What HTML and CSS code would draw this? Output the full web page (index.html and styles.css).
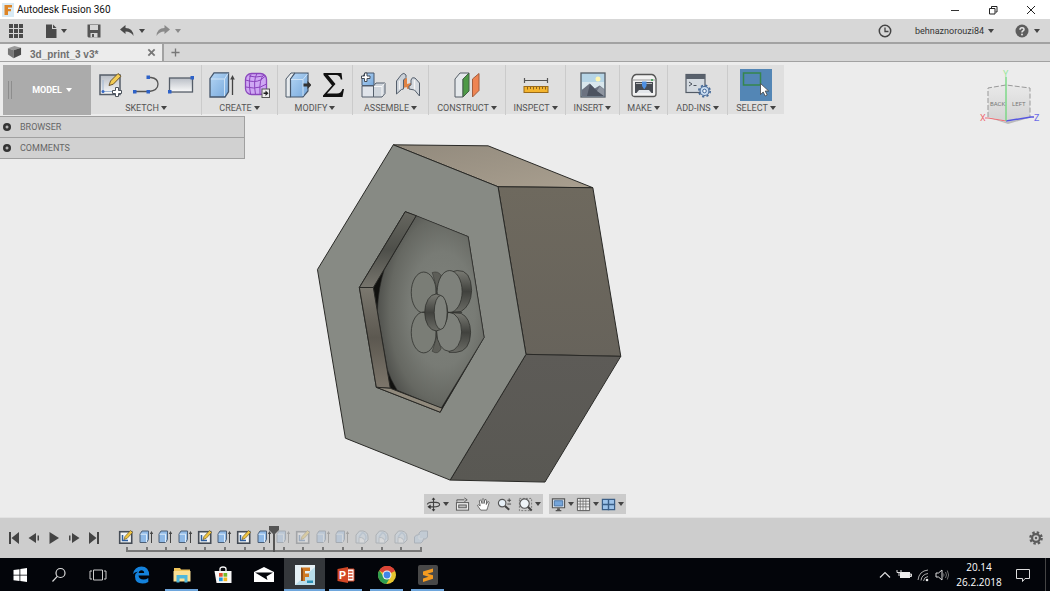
FILE: index.html
```html
<!DOCTYPE html>
<html lang="en">
<head>
  <meta charset="utf-8">
  <title>Autodesk Fusion 360</title>
  <link rel="stylesheet" href="styles.css">
</head>
<body>
  <!-- icons used more than once -->
  <svg class="sprite" aria-hidden="true">
    <defs>
      <linearGradient id="blue" x1="0" y1="0" x2="1" y2="1">
        <stop offset="0" stop-color="#b5d6f5"/>
        <stop offset="1" stop-color="#76a8dc"/>
      </linearGradient>
      <linearGradient id="metal" x1="0" y1="0" x2="0" y2="1">
        <stop offset="0" stop-color="#b9bec6"/>
        <stop offset="1" stop-color="#fafafa"/>
      </linearGradient>
    </defs>
    <symbol id="step-sketch" viewBox="0 0 16 16">
      <rect x="1.7" y="2.7" width="12" height="11.5" fill="#f2f4f6" stroke="#444b55" stroke-width="1.6"/>
      <path d="M4.5 6v5.5H10" fill="none" stroke="#2f5f9e" stroke-width="1.5"/>
      <path d="M6 10.5l1-3 5.500-6 2 2-5.500 6z" fill="#f0c440" stroke="#6d5a2a" stroke-width=".7"/>
    </symbol>
    <symbol id="step-extrude" viewBox="0 0 16 16">
      <path d="M2 5l2-3h6.500v8.500l-2 3H2z" fill="#8fb9e6" stroke="#4c5e75"/>
      <path d="M2.500 5.200H8.500v8" fill="none" stroke="#dcecfa"/>
      <path d="M13.500 14V4" stroke="#444" fill="none"/>
      <path d="M11.800 5l1.700-3 1.700 3z" fill="#444"/>
    </symbol>
    <symbol id="step-fillet" viewBox="0 0 16 16">
      <path d="M2 14V6l3.500-4H9q5 1 5 6v3l-3 3z" fill="#c9dcee" stroke="#667482"/>
      <path d="M5 14V8.500Q11 8 11 14z" fill="#f4f6f8" stroke="#8493a3"/>
      <path d="M5 8l3.500-4.500Q12 5 12 9l-1 2" fill="none" stroke="#8fb1d4" stroke-width="1.500"/>
    </symbol>
    <symbol id="step-combine" viewBox="0 0 16 16">
      <path d="M1.500 8l2-2H6V4l2-2h6.500v6l-2 2H10v2l-2 2H1.500z" fill="#a9c8e6" stroke="#5c738c"/>
      <path d="M6 6v4h4" fill="none" stroke="#e4eff8"/>
    </symbol>
  </svg>

  <header class="titlebar">
    <svg class="app-logo" viewBox="0 0 12 14"><rect width="12" height="14" fill="#d9eaf4"/><path d="M2.500 2h7.500v2.500H6V6h3v2.300H6V12H2.500z" fill="#dd8527"/></svg>
    <h1>Autodesk Fusion 360</h1>
    <div class="window-buttons">
      <button aria-label="Minimize"><svg viewBox="0 0 10 10"><path d="M1 5.500h8" stroke="#333" fill="none"/></svg></button>
      <button aria-label="Restore"><svg viewBox="0 0 10 10"><path d="M1.500 3.500h5.500v5.500H1.500zM3.500 3V1.500H9V7H7.500" stroke="#222" fill="none"/></svg></button>
      <button aria-label="Close"><svg viewBox="0 0 10 10"><path d="M1 1l8 8M9 1l-8 8" stroke="#222" fill="none"/></svg></button>
    </div>
  </header>

  <div class="appbar">
    <button class="app-grid" aria-label="Data panel"><svg viewBox="0 0 16 16"><path d="M1 1h4v4H1zM6 1h4v4H6zM11 1h4v4h-4zM1 6h4v4H1zM6 6h4v4H6zM11 6h4v4h-4zM1 11h4v4H1zM6 11h4v4H6zM11 11h4v4h-4z" fill="#4a4a4a"/></svg></button>
    <button class="app-file" aria-label="File"><svg viewBox="0 0 16 16"><path d="M3 1.500h6V6h4.500v9H3z" fill="#4a4a4a"/><path d="M10 1.500L13.500 5H10z" fill="#4a4a4a"/></svg><i class="caret"></i></button>
    <button class="app-save" aria-label="Save"><svg viewBox="0 0 16 16"><path d="M1.500 1.500h13v13h-12l-1-1z" fill="#555"/><path d="M4 2h8v5H4z" fill="#d6d6d6"/><path d="M4.500 10h7v4.500h-7z" fill="#d6d6d6"/><path d="M6 11h2v3H6z" fill="#555"/></svg></button>
    <button class="app-undo" aria-label="Undo"><svg viewBox="0 0 16 16"><path d="M1 6.500L6.500 2v3Q14 5 14.500 13 12 8.500 6.500 8.500V11z" fill="#4a4a4a"/></svg><i class="caret"></i></button>
    <button class="app-redo" aria-label="Redo" disabled><svg viewBox="0 0 16 16"><path d="M15 6.500L9.500 2v3Q2 5 1.500 13 4 8.500 9.500 8.500V11z" fill="#777"/></svg><i class="caret"></i></button>
    <button class="app-jobs" aria-label="Job status"><svg viewBox="0 0 16 16"><circle cx="8" cy="8" r="5.700" fill="none" stroke="#444" stroke-width="1.500"/><path d="M8 4.500V8.500h3.500" fill="none" stroke="#444" stroke-width="1.300"/></svg></button>
    <button class="app-user">behnaznorouzi84 <i class="caret"></i></button>
    <button class="app-help" aria-label="Help"><svg viewBox="0 0 16 16"><circle cx="8" cy="8" r="6.500" fill="#5d5d5d"/><path d="M6 6.700q0-2 2-2t2 1.700q0 1-1.200 1.600Q8 8.400 8 9.500" fill="none" stroke="#e4e4e4" stroke-width="1.500"/><circle cx="8" cy="11.500" r="1" fill="#e4e4e4"/></svg><i class="caret"></i></button>
  </div>

  <nav class="tabs">
    <div class="tab">
      <svg class="tab-icon" viewBox="0 0 16 16"><path d="M1 3.500L8 1l7 2-8 2.500z" fill="#999"/><path d="M1 3.500l6 2V14l-6-4z" fill="#777"/><path d="M7 5.500L15 3v7.500L7 14z" fill="#4c4c4c"/></svg>
      <a href="#">3d_print_3 v3*</a>
      <button aria-label="Close tab"><svg viewBox="0 0 10 10"><path d="M1.500 1.500l7 7M8.500 1.500l-7 7" stroke="#777" stroke-width="2" fill="none"/></svg></button>
    </div>
    <button class="new-tab" aria-label="New design"><svg viewBox="0 0 10 10"><path d="M5 .5v9M.5 5h9" stroke="#777" stroke-width="1.500" fill="none"/></svg></button>
  </nav>

  <main class="workspace">
    <svg class="model" viewBox="0 62 1050 456" role="img" aria-label="Hexagonal part">
      <defs>
        <linearGradient id="top-face" x1="0" y1="0" x2="1" y2="1"><stop offset="0" stop-color="#928a7d"/><stop offset="1" stop-color="#a99f8f"/></linearGradient>
        <linearGradient id="side-face" x1="0" y1="0" x2="0" y2="1"><stop offset="0" stop-color="#6e695e"/><stop offset="1" stop-color="#67635b"/></linearGradient>
        <linearGradient id="low-face" x1="0" y1="0" x2="0" y2="1"><stop offset="0" stop-color="#5d5b57"/><stop offset="1" stop-color="#595853"/></linearGradient>
        <linearGradient id="wall-up" x1="0" y1="0" x2="0" y2="1"><stop offset="0" stop-color="#66665f"/><stop offset=".5" stop-color="#4e4f4a"/><stop offset="1" stop-color="#77756d"/></linearGradient>
        <linearGradient id="wall-low" x1="0" y1="0" x2="0" y2="1"><stop offset="0" stop-color="#7b786f"/><stop offset=".5" stop-color="#5c5850"/><stop offset="1" stop-color="#7d766b"/></linearGradient>
        <linearGradient id="petal-wall" x1="0" y1="0" x2="0" y2="1"><stop offset="0" stop-color="#7a7b74"/><stop offset=".5" stop-color="#41423e"/><stop offset="1" stop-color="#6b6c66"/></linearGradient>
        <radialGradient id="disc" gradientUnits="userSpaceOnUse" cx="0" cy="0" r="100" gradientTransform="translate(442 310) scale(.66 1.15)"><stop offset="0" stop-color="#7f827c"/><stop offset=".5" stop-color="#787b75"/><stop offset=".8" stop-color="#666862"/><stop offset="1" stop-color="#4e4f4b"/></radialGradient>
      </defs>
      <g stroke="#292926" stroke-width="1" stroke-linejoin="round">
        <path d="M393 145L488 146 593 188 498 187z" fill="url(#top-face)"/>
        <path d="M498 187L593 188 621 357 526 355z" fill="url(#side-face)"/>
        <path d="M526 355L621 357 545 483 450 481z" fill="url(#low-face)"/>
        <path d="M393 145L498 187 526 355 450 481 345 439 317 270z" fill="#878a84"/>
        <path d="M405 212L468 237 484 338 440 413 376 388 359 288z" fill="#11110f"/>
        <path d="M384 270L416 216 468 237 484 338 441 409 397 391Q390 380 387 370L377 312Q378 288 384 270z" fill="url(#disc)" stroke-width=".6"/>
        <path d="M405 212L416 216 373 288H359z" fill="url(#wall-up)"/>
        <path d="M359 288H373L390 389 376 388z" fill="url(#wall-low)"/>
        <path d="M376 388L390 389 442 409 440 413z" fill="#918a7d"/>
      </g>
      <g stroke="#30312d" stroke-width=".8">
        <path d="M432 273Q438 271 441 276L437 290zM432 352Q438 356 441 349L437 336z" fill="#5d5e58" stroke-width=".5"/>
        <path d="M457 271Q471 270 471.500 291 471 306 461 312L449 313V273z" fill="url(#petal-wall)"/>
        <path d="M461 314Q470 318 470.500 333 470 352 456 353H449V313z" fill="url(#petal-wall)"/>
        <ellipse cx="423.500" cy="293" rx="12.500" ry="20.500" fill="#7a7d76"/>
        <ellipse cx="449.500" cy="292" rx="12.500" ry="21" fill="#7e817b"/>
        <ellipse cx="423.500" cy="333" rx="12.500" ry="20.500" fill="#7a7d76"/>
        <ellipse cx="449" cy="332.500" rx="12.500" ry="19.500" fill="#7e817b"/>
        <path d="M422 313h40M436 288v50" fill="none"/>
        <ellipse cx="436" cy="313" rx="11.500" ry="18.500" fill="url(#petal-wall)"/>
        <ellipse cx="440.500" cy="313" rx="6.500" ry="17" fill="#7f827c"/>
      </g>
    </svg>

    <section class="ribbon" aria-label="Tools">
      <button class="mode"><i class="grip"></i><span>MODEL</span> <i class="caret"></i></button>

      <div class="group">
        <div class="tools">
          <button aria-label="Create sketch"><svg viewBox="0 0 26 26"><rect x="2" y="3" width="20" height="19.500" fill="url(#metal)" stroke="#555d68" stroke-width="1.500"/><path d="M5 8v11.500h12" fill="none" stroke="#9fb6d4"/><circle cx="5" cy="19.500" r="1.500" fill="#3768c4"/><path d="M11 13.500l1.500-4.500L20 1.500l3 2.700-7.700 8z" fill="#f3cc55" stroke="#6b542d"/><path d="M17.500 15.500h3v3h3v3h-3v3h-3v-3h-3v-3h3z" fill="#fff" stroke="#4c535c"/></svg></button>
          <button aria-label="Line"><svg viewBox="0 0 26 26"><path d="M2 19.500h14M15 5.500h3q7 1 7 6.500 0 6.500-9 7.500" fill="none" stroke="#555" stroke-width="1.300"/><path d="M0 18h3.500v3.500H0zM13.500 18H17v3.500h-3.500zM13.500 3.500H17V7h-3.500z" fill="#2e62c8"/></svg></button>
          <button aria-label="Rectangle"><svg viewBox="0 0 26 26"><rect x="1.500" y="6" width="23" height="14" fill="url(#metal)" stroke="#555d68" stroke-width="1.300"/><path d="M0 18h3.500v3.500H0zM22.500 4H26v3.500h-3.500z" fill="#2e62c8"/></svg></button>
        </div>
        <button class="menu">SKETCH <i class="caret"></i></button>
      </div>

      <div class="group">
        <div class="tools">
          <button aria-label="Extrude"><svg viewBox="0 0 26 26"><path d="M1 6.500L5 .8h14.500v19L16 25H1z" fill="url(#blue)" stroke="#46566b" stroke-width="1.300"/><path d="M2 7h13.500v17M15.500 7l3.500-5.500" fill="none" stroke="#cfe3f6"/><path d="M23.500 23V6" stroke="#444" stroke-width="1.300"/><path d="M21.200 7.500l2.300-4.500 2.300 4.500z" fill="#444"/></svg></button>
          <button aria-label="Create form"><svg viewBox="0 0 26 26"><rect x="1.500" y="1.500" width="21" height="21" rx="6" fill="#cfa8f4" stroke="#8b48bd" stroke-width="1.300"/><path d="M1.500 8q9 3 15 0l5-4M1.500 15q9 2 15 0l6-3M7 2.500Q4 8 6.500 22M13 1.500Q9 8 11.500 22.500M20 3q-5 3-4 19M5 4q7 2 14 0" fill="none" stroke="#8a43bd"/><rect x="18" y="17" width="7.500" height="8.500" fill="#eee" stroke="#555"/><path d="M19.500 20.500h2v-2l3 2.700-3 2.800v-2h-2z" fill="#222"/></svg></button>
        </div>
        <button class="menu">CREATE <i class="caret"></i></button>
      </div>

      <div class="group">
        <div class="tools">
          <button aria-label="Press pull"><svg viewBox="0 0 26 26"><path d="M1 7l5-6h4L5.500 7v18H1z" fill="#e7ebee" stroke="#4d5a69"/><path d="M5.500 7L10 1h13v18l-5 6H5.500z" fill="url(#blue)" stroke="#46566b" stroke-width="1.200"/><path d="M6 7.500h12V24M18 7.500L22.500 2" stroke="#cfe3f6" fill="none"/><path d="M18.500 11.500h4V9l4 4-4 4v-2.500h-4z" fill="#333"/></svg></button>
          <button aria-label="Parameters"><svg viewBox="0 0 26 26"><path d="M3.500 1h18l.8 6.500h-1.500Q20 3 16 3H8l7.500 9-8.500 9.500H17q4 0 5.500-4.500H24l-1.500 8H3v-1.500L12 13.500 3.500 3z" fill="#111"/></svg></button>
        </div>
        <button class="menu">MODIFY <i class="caret"></i></button>
      </div>

      <div class="group">
        <div class="tools">
          <button aria-label="New component"><svg viewBox="0 0 26 26"><path d="M2 13.500V6L5 1h9v12.500z" fill="url(#blue)" stroke="#47576c"/><path d="M2 14h11.500v11H2z" fill="#e0e4ea" stroke="#555f6c"/><path d="M13.500 14L16 11h9v10.500L22 25h-8.500z" fill="#cfd5dc" stroke="#555f6c"/><path d="M14 14.500h8V24M22 14.500l2.500-3" fill="none" stroke="#f7f7f7"/><path d="M4.500 1h2.500v3h3v2.500H7v3H4.500v-3h-3V4h3z" fill="#fff" stroke="#444b55"/></svg></button>
          <button aria-label="Joint"><svg viewBox="0 0 26 26"><path d="M8 7l4-1v9l-4 1zM12 12l4-1v5l-4 1z" fill="#e08345"/><path d="M1.500 22V9l5-6.500Q9 0 11 3v2.500L8.500 8v9l-2 .5z" fill="#cbd1d8" stroke="#555f6c"/><path d="M24.500 24l-5-6-5.500-1v-3l2-1V8q1-3.500 4-2l4.500 5z" fill="#d4d9df" stroke="#555f6c"/><path d="M4.500 8.500v9M19.500 8v9.500" stroke="#f4f4f4" stroke-width="1.300"/></svg></button>
        </div>
        <button class="menu">ASSEMBLE <i class="caret"></i></button>
      </div>

      <div class="group">
        <div class="tools">
          <button aria-label="Offset plane"><svg viewBox="0 0 26 26"><path d="M1 7l5-6h9L9 7v18H1z" fill="#e4e8eb" stroke="#555d66"/><path d="M9 7l6-6v18l-6 6z" fill="#4d9946" stroke="#426044"/><path d="M18.500 7L25 1.500v17L18.500 25z" fill="#ee8452" stroke="#a35d3d"/></svg></button>
        </div>
        <button class="menu">CONSTRUCT <i class="caret"></i></button>
      </div>

      <div class="group">
        <div class="tools">
          <button aria-label="Measure"><svg viewBox="0 0 26 26"><path d="M1.500 8.500h23M1.500 6v5M24.500 6v5" fill="none" stroke="#555" stroke-width="1.200"/><rect x="1" y="14.500" width="24" height="6" fill="#f4b52e" stroke="#9a6a19"/><path d="M4.500 15v2.500M7.500 15v2M10.500 15v2.500M13.500 15v2M16.500 15v2.500M19.500 15v2M22.500 15v2.500" stroke="#8c611b"/></svg></button>
        </div>
        <button class="menu">INSPECT <i class="caret"></i></button>
      </div>

      <div class="group">
        <div class="tools">
          <button aria-label="Insert image"><svg viewBox="0 0 26 26"><rect x="1" y="1" width="24" height="24" fill="#b6d5e6" stroke="#555d66" stroke-width="1.300"/><path d="M2 10h22v7H2z" fill="#d9e7ed"/><circle cx="18" cy="7" r="2.500" fill="#fff6b0"/><path d="M1.700 18l8-6.500 5 5 5-3 5 4v7h-23z" fill="#6b7280"/><path d="M10 12l-3 12h17l-9-7z" fill="#4c5360"/><path d="M20 14l-3 5 7 5v-6.500z" fill="#8f96a1"/></svg></button>
        </div>
        <button class="menu">INSERT <i class="caret"></i></button>
      </div>

      <div class="group">
        <div class="tools">
          <button aria-label="3D print"><svg viewBox="0 0 26 26"><path d="M1 7q1-4 4-4.500h16q3 .5 4 4.500v15q0 2.500-2.500 2.500h-19Q1 24.500 1 22z" fill="#f2f2f2" stroke="#555" stroke-width="1.300"/><path d="M2 8h22" stroke="#999"/><rect x="4" y="10" width="18" height="11" fill="#474b52"/><path d="M5 11.500h16" stroke="#bbb"/><path d="M11 9.500h4.500V14l-2 3h-.5l-2-3z" fill="#4e8fe0"/><path d="M8 18h10l2.500 3h-15z" fill="#e3e6ea"/><circle cx="21" cy="8" r="1" fill="#2b9b43"/></svg></button>
        </div>
        <button class="menu">MAKE <i class="caret"></i></button>
      </div>

      <div class="group">
        <div class="tools">
          <button aria-label="Scripts and add-ins"><svg viewBox="0 0 26 26"><rect x="1" y="2.500" width="19" height="18" fill="#d4dae0" stroke="#535b66" stroke-width="1.200"/><path d="M1 2.500h19V7H1z" fill="#59616c"/><path d="M4 10l3 2-3 2M8.500 13.500h3" fill="none" stroke="#4b525c"/><circle cx="19.500" cy="19" r="5.700" fill="none" stroke="#456998" stroke-width="1.600" stroke-dasharray="2.200 2.280"/><circle cx="19.500" cy="19" r="4.500" fill="#c9ddf2" stroke="#456998" stroke-width="1.200"/><circle cx="19.500" cy="19" r="1.800" fill="#f3f7fb" stroke="#456998"/></svg></button>
        </div>
        <button class="menu">ADD-INS <i class="caret"></i></button>
      </div>

      <div class="group">
        <div class="tools">
          <button class="selected" aria-label="Select"><svg viewBox="0 0 32 32"><rect x="3.500" y="4" width="17" height="12" fill="none" stroke="#36864c" stroke-width="1.500"/><path d="M20.500 14.500v11l2.700-2.500 2 4 2-1-2-4h3.500z" fill="#fff" stroke="#444" stroke-width=".8"/></svg></button>
        </div>
        <button class="menu">SELECT <i class="caret"></i></button>
      </div>
    </section>

    <aside class="panels">
      <button><svg viewBox="0 0 8 8"><circle cx="4" cy="4" r="4" fill="#333"/><path d="M4 2.500v3M2.500 4h3" stroke="#ddd"/></svg>BROWSER</button>
      <button><svg viewBox="0 0 8 8"><circle cx="4" cy="4" r="4" fill="#333"/><path d="M4 2.500v3M2.500 4h3" stroke="#ddd"/></svg>COMMENTS</button>
    </aside>

    <svg class="viewcube" viewBox="0 0 64 60" aria-label="View cube">
      <defs>
        <linearGradient id="cube-face" x1="0" y1="0" x2="0" y2="1"><stop offset="0" stop-color="#e9e9e9"/><stop offset="1" stop-color="#d3d3d3"/></linearGradient>
      </defs>
      <path d="M8 49l19 5 26-5-24 7z" fill="#bbb"/>
      <path d="M9 20l18-3v36L9 49z" fill="url(#cube-face)"/>
      <path d="M27 17l24 3v29l-24 4z" fill="url(#cube-face)"/>
      <path d="M9 49V20l18-3 24 3v29" fill="none" stroke="#999" stroke-dasharray="5 2"/>
      <path d="M27 53L9 50H6" fill="none" stroke="#ee6d74"/>
      <path d="M27 53l25-4h3" fill="none" stroke="#5555e0" stroke-width="1.500"/>
      <path d="M27 53V9" fill="none" stroke="#6fd77b" stroke-width="1.300"/>
      <text x="11" y="38" class="face">BACK</text>
      <text x="33" y="38" class="face">LEFT</text>
      <text x="24" y="9" class="axis-y">Y</text>
      <text x="1" y="53" class="axis-x">X</text>
      <text x="55" y="53" class="axis-z">Z</text>
    </svg>

    <div class="navbar">
      <div class="nav-group">
        <button aria-label="Orbit"><svg viewBox="0 0 16 16"><path d="M8 1v14M1.500 8q0-2.500 6.500-2.500T14.500 8 8 10.500H4" fill="none" stroke="#444" stroke-width="1.200"/><path d="M6 3l2-2.500L10 3M6 13l2 2.500 2-2.500M5 8L1.500 10.500 5 13z" fill="#333"/></svg><i class="caret"></i></button>
        <button aria-label="Look at"><svg viewBox="0 0 16 16"><rect x="1.500" y="6" width="13" height="8" fill="#eee" stroke="#555"/><rect x="4" y="8.500" width="8" height="3" fill="#bbb" stroke="#555"/><path d="M2 5V3h8M10 1l3 2-3 2" fill="none" stroke="#555"/></svg></button>
        <button aria-label="Pan"><svg viewBox="0 0 16 16"><path d="M5 14L1.500 9q1-1.500 3 .5L3.500 4Q4.500 2.500 5.500 4L6.500 7V2.500Q7.500 1 8.500 2.500V7l1-4Q11 2 11.300 3.500L11 8l1.500-3q1.500-.5 1.500 1L12.500 11l-1 3z" fill="#fff" stroke="#555" stroke-width=".9"/></svg></button>
        <button aria-label="Zoom"><svg viewBox="0 0 16 16"><circle cx="5.500" cy="6.500" r="4" fill="#e7f0f7" stroke="#555" stroke-width="1.200"/><path d="M8.500 9.500l4.500 4" stroke="#444" stroke-width="2.200"/><path d="M11 3.500h4M13 1.500v4M11 7.500h4" stroke="#444"/></svg></button>
        <button aria-label="Fit"><svg viewBox="0 0 16 16"><rect x="1.500" y="1.500" width="13" height="13" fill="none" stroke="#777" stroke-dasharray="2 1.500"/><circle cx="7" cy="7" r="5" fill="#eff4f8" stroke="#555" stroke-width="1.200"/><path d="M10.500 10.500l4 4" stroke="#444" stroke-width="2.200"/></svg><i class="caret"></i></button>
      </div>
      <div class="nav-group">
        <button aria-label="Display settings"><svg viewBox="0 0 16 16"><path d="M1.500 2h13v9.500h-13zM5 14.500h6" fill="#dce4ec" stroke="#555" stroke-width="1.200"/><path d="M3.500 4h9v5.500h-9z" fill="#75a5da" stroke="#4772a3"/><path d="M8 12v2" stroke="#555" stroke-width="3"/></svg><i class="caret"></i></button>
        <button aria-label="Grid"><svg viewBox="0 0 16 16"><path d="M1.500 1.500h13v13h-13z" fill="#eee" stroke="#555"/><path d="M4.500 1v14M7.500 1v14M10.500 1v14M1 4.500h14M1 7.500h14M1 10.500h14" fill="none" stroke="#666" stroke-width=".8"/></svg><i class="caret"></i></button>
        <button aria-label="Viewports"><svg viewBox="0 0 16 16"><path d="M1.500 2.500h13v11h-13z" fill="#9dc3ea" stroke="#3b5f88" stroke-width="1.300"/><path d="M8 2v12M1 8h14" stroke="#3b5f88" stroke-width="1.500"/></svg><i class="caret"></i></button>
      </div>
    </div>
  </main>

  <section class="timeline" aria-label="Timeline">
    <div class="playback">
      <button aria-label="Go to start"><svg viewBox="0 0 12 12"><path d="M1 0h2v12H1zM11 0v12L3.500 6z" fill="#444"/></svg></button>
      <button aria-label="Step back"><svg viewBox="0 0 12 12"><path d="M8 1v10L.5 6zM9.500 3.500H11v5H9.500z" fill="#444"/></svg></button>
      <button aria-label="Play"><svg viewBox="0 0 12 12"><path d="M1.500 0L11 6l-9.500 6z" fill="#444"/></svg></button>
      <button aria-label="Step forward"><svg viewBox="0 0 12 12"><path d="M4 1v10l7.500-5zM1 3.500h1.500v5H1z" fill="#444"/></svg></button>
      <button aria-label="Go to end"><svg viewBox="0 0 12 12"><path d="M9 0h2v12H9zM1 0v12l7.500-6z" fill="#444"/></svg></button>
    </div>
    <div class="track">
      <ol class="steps">
        <li><svg><use href="#step-sketch"/></svg></li>
        <li><svg><use href="#step-extrude"/></svg></li>
        <li><svg><use href="#step-extrude"/></svg></li>
        <li><svg><use href="#step-extrude"/></svg></li>
        <li><svg><use href="#step-sketch"/></svg></li>
        <li><svg><use href="#step-extrude"/></svg></li>
        <li><svg><use href="#step-sketch"/></svg></li>
        <li><svg><use href="#step-extrude"/></svg></li>
        <li class="future"><svg><use href="#step-extrude"/></svg></li>
        <li class="future"><svg><use href="#step-sketch"/></svg></li>
        <li class="future"><svg><use href="#step-extrude"/></svg></li>
        <li class="future"><svg><use href="#step-extrude"/></svg></li>
        <li class="future"><svg><use href="#step-fillet"/></svg></li>
        <li class="future"><svg><use href="#step-fillet"/></svg></li>
        <li class="future"><svg><use href="#step-fillet"/></svg></li>
        <li class="future"><svg><use href="#step-combine"/></svg></li>
      </ol>
      <div class="ruler"><i></i><i></i><i></i><i></i><i></i><i></i><i></i><i></i><i></i><i></i><i></i><i></i><i></i><i></i><i></i></div>
      <svg class="marker" viewBox="0 0 10 26"><path d="M0 0h10v4L6 8v18H4V8L0 4z" fill="#555"/></svg>
    </div>
    <button class="settings" aria-label="Timeline settings"><svg viewBox="0 0 14 14"><circle cx="7" cy="7" r="5.600" fill="none" stroke="#5c5c5c" stroke-width="2.400" stroke-dasharray="2.400 2"/><circle cx="7" cy="7" r="3.900" fill="none" stroke="#5c5c5c" stroke-width="2.200"/><circle cx="7" cy="7" r="1.200" fill="#5c5c5c"/></svg></button>
  </section>

  <footer class="taskbar">
    <div class="system">
      <button aria-label="Start"><svg viewBox="0 0 20 20"><path d="M3.500 5l6-.8v5.500h-6zM10.300 4l6.700-1v6.700h-6.700zM3.500 10.500h6V16l-6-.8zM10.300 10.500H17V17l-6.700-.9z" fill="#fff"/></svg></button>
      <button aria-label="Search"><svg viewBox="0 0 20 20"><circle cx="11.500" cy="8" r="4.500" fill="none" stroke="#ddd" stroke-width="1.200"/><path d="M8.300 11.300L3.500 16.500" stroke="#ddd" stroke-width="1.200"/></svg></button>
      <button aria-label="Task view"><svg viewBox="0 0 20 20"><path d="M5.500 5h9v10h-9zM4 6H2v8h2M16 6h2v8h-2" fill="none" stroke="#ccc"/></svg></button>
    </div>
    <div class="apps">
      <button aria-label="Edge"><svg viewBox="0 0 20 20"><path d="M2 9Q3.500 1.500 10.500 1.500q7.500 0 7.700 9H7.500q.5 4 5 4 2.500 0 4.800-1.500v4Q14.500 18.500 11.500 18.500 4 18.500 4 11.500 4.300 8 7 6.500 3.500 7 2 9zM7.700 8h5.500q-.2-2.800-2.700-2.800T7.700 8z" fill="#1482dc"/></svg></button>
      <button class="open" aria-label="File Explorer"><svg viewBox="0 0 20 20"><path d="M2 3h6l1 1.500h9V16H2z" fill="#f0c45a"/><path d="M1.500 6h17v10.500h-17z" fill="#fbe094"/><path d="M4.500 10h11v7.500h-3v-4h-5v4h-3z" fill="#4eb8dc"/></svg></button>
      <button aria-label="Store"><svg viewBox="0 0 20 20"><path d="M1.500 6h17v12h-15z" fill="#f7f7f7"/><path d="M7 6V4q0-2 3-2t3 2v2" fill="none" stroke="#f7f7f7" stroke-width="1.300"/><path d="M6 8h3.700v3.700H6z" fill="#e5502e"/><path d="M10.500 8h3.700v3.700h-3.700z" fill="#77b82a"/><path d="M6 12.500h3.700v3.700H6z" fill="#2498da"/><path d="M10.500 12.500h3.700v3.700h-3.700z" fill="#f4b81e"/></svg></button>
      <button aria-label="Mail"><svg viewBox="0 0 20 20"><path d="M0 7l10-5 10 5v10H0z" fill="#fff"/><path d="M1 7.500h18l-6.500 4 1 3.500z" fill="#05070c"/></svg></button>
      <button class="open active" aria-label="Fusion 360"><svg viewBox="0 0 20 20"><rect width="20" height="20" fill="#e5f0f5"/><path d="M0 20L20 2v18z" fill="#b9dcea"/><path d="M6 2.500h9v3.500H10v2.500h4v3.500h-4v4H6z" fill="#cf7924"/><path d="M6 2.500l2 1.500v12H6z" fill="#8d4e1c"/><path d="M12 15.500h6v2.500h-6z" fill="#2b91b7"/></svg></button>
      <button class="open" aria-label="PowerPoint"><svg viewBox="0 0 20 20"><path d="M10 4h8v12h-8z" fill="#fff" stroke="#d24726"/><path d="M12.500 7h4M12.500 10h4M12.500 13h4" stroke="#d24726" stroke-width="1.300"/><path d="M1.500 4L12 2v16L1.500 16z" fill="#d24726"/><text x="3" y="14" class="letter">P</text></svg></button>
      <button class="open" aria-label="Chrome"><svg viewBox="0 0 20 20"><circle cx="10" cy="10" r="9" fill="#e7c52f"/><path d="M10 10L2.200 5.500A9 9 0 0 1 18 6z" fill="#db4437"/><path d="M2.200 5.500A9 9 0 0 0 9.200 19L13.500 12 7 12z" fill="#2d9d50"/><path d="M10 6h8a9 9 0 0 0-8-5z" fill="#db4437"/><circle cx="10" cy="10" r="4.500" fill="#f5f5f5"/><circle cx="10" cy="10" r="3.400" fill="#4285e8"/></svg></button>
      <button class="open" aria-label="Sublime Text"><svg viewBox="0 0 20 20"><rect width="20" height="20" rx="2" fill="#484848"/><path d="M5 6.500L15 3.500V7l-5.500 1.700 5.500 1.500v3.500L5 17v-3.500l5.500-1.800L5 10z" fill="#f59b20"/></svg></button>
    </div>
    <div class="tray">
      <svg viewBox="0 0 16 16"><path d="M3 10.500l5-5 5 5" fill="none" stroke="#ddd" stroke-width="1.200"/></svg>
      <svg viewBox="0 0 16 16"><rect x="4.500" y="5.500" width="9" height="5" fill="#eee" stroke="#eee"/><path d="M14 7h1.500v2.500H14zM1 3v2.500h4V3M3 5.500V9" fill="none" stroke="#ddd"/></svg>
      <svg viewBox="0 0 16 16"><path d="M3 13Q4 4 13 3M6 13.500Q6.500 7.500 13 6.500M8.500 14q.5-4 4.500-4.500" fill="none" stroke="#aaa"/><circle cx="12" cy="13" r="1.300" fill="#eee"/></svg>
      <svg viewBox="0 0 16 16"><path d="M2 6h2.500L8 3v10L4.500 10H2z" fill="none" stroke="#ddd"/><path d="M9.500 6.500q1 1.500 0 3M11.500 5q2 3 0 6M13.300 3.500q2.700 4.500 0 9" fill="none" stroke="#888" stroke-width=".8"/></svg>
    </div>
    <time class="clock">20.14<br>26.2.2018</time>
    <button class="notices" aria-label="Notifications"><svg viewBox="0 0 16 16"><path d="M1.500 2.500h13v9H10l-2.500 3v-3h-6z" fill="none" stroke="#ddd"/></svg></button>
  </footer>
</body>
</html>
```

FILE: styles.css
```css
* {
  box-sizing: border-box;
}
body {
  margin: 0;
  min-height: 100vh;
  display: flex;
  flex-direction: column;
  font-family: Roboto, sans-serif;
  font-size: 9px;
  color: #555;
  background-color: #ececec;
}
button {
  display: flex;
  align-items: center;
  justify-content: center;
  padding: 0;
  border: none;
  background: none;
  font: inherit;
  color: inherit;
  cursor: pointer;
}
svg {
  display: block;
  flex: none;
}
.sprite {
  position: absolute;
  width: 0;
  height: 0;
}
.caret {
  margin-left: 4px;
  border: 3px solid transparent;
  border-top: 4px solid #444;
  border-bottom: none;
}

/* title bar */
.titlebar {
  display: flex;
  align-items: center;
  height: 19px;
  padding-left: 2px;
  background-color: white;
}
.app-logo {
  width: 12px;
  height: 14px;
}
.titlebar h1 {
  margin: 0 0 0 3px;
  font-size: 10px;
  font-weight: normal;
  color: #111;
}
.window-buttons {
  display: flex;
  margin-left: auto;
}
.window-buttons button {
  width: 38px;
  height: 19px;
}
.window-buttons svg {
  width: 10px;
  height: 10px;
}

/* file bar */
.appbar {
  display: flex;
  align-items: center;
  height: 25px;
  padding: 0 10px 0 8px;
  background-color: #d7d7d7;
  border-bottom: 2px solid #a2a2a2;
}
.appbar svg {
  width: 16px;
  height: 16px;
}
.app-file {
  margin-left: 19px;
}
.app-file .caret {
  margin-left: 2px;
}
.app-save {
  margin-left: 19px;
}
.app-undo {
  margin-left: 17px;
}
.app-redo {
  margin-left: 10px;
  opacity: 0.8;
}
.app-redo .caret {
  border-top-color: #777;
}
.app-jobs {
  margin-left: auto;
}
.app-user {
  margin-left: 22px;
  color: #333;
}
.app-help {
  margin-left: 20px;
}

/* document tabs */
.tabs {
  display: flex;
  height: 18px;
  background-color: #d7d7d7;
  border-bottom: 1px solid #a2a2a2;
}
.tab {
  display: flex;
  align-items: center;
  width: 164px;
  padding: 0 6px 0 7px;
  background-color: #ececec;
  border-right: 2px solid #a2a2a2;
}
.tab-icon {
  width: 15px;
  height: 15px;
}
.tab a {
  margin: 3px auto 0 8px;
  font-family: "Liberation Sans", sans-serif;
  font-size: 10px;
  font-weight: bold;
  color: #707070;
  text-decoration: none;
}
.tab button svg, .new-tab svg {
  width: 9px;
  height: 9px;
}
.new-tab {
  width: 22px;
}

/* canvas */
.workspace {
  position: relative;
  flex: 1;
  min-height: 360px;
  padding-top: 3px;
  background-color: #ececec;
  border-bottom: 1px solid #e2e2e2;
}
.model {
  position: absolute;
  top: 0;
  left: 0;
  width: 100%;
  height: 100%;
}
.ribbon {
  position: relative;
  display: grid;
  grid-template-columns: 88px 110px 76px 75px 76px 77px 60px 54px 48px 60px 57px;
  width: max-content;
  height: 49px;
  margin-left: 3px;
  background-color: #dfdfdf;
}
.mode {
  padding-right: 19px;
  background-color: #ababab;
  color: white;
  font-weight: bold;
}
.mode .caret {
  border-top-color: white;
}
.mode .grip {
  width: 4px;
  height: 18px;
  margin: 0 auto 0 5px;
  border: 1px solid #8d8d8d;
  border-width: 0 1px;
}
.group {
  display: flex;
  flex-direction: column;
  align-items: center;
  padding-top: 4px;
}
.group + .group {
  border-left: 1px solid #cbcbcb;
}
.tools {
  display: flex;
  align-items: center;
  gap: 9px;
  height: 32px;
}
.tools svg {
  width: 26px;
  height: 26px;
}
.tools .selected {
  background-color: #5386b5;
}
.tools .selected svg {
  width: 32px;
  height: 32px;
}
.menu {
  height: 14px;
  white-space: nowrap;
}
.menu .caret {
  margin-left: 2px;
}
.panels {
  position: relative;
  width: 245px;
  margin-top: 2px;
  border-right: 1px solid #a0a0a0;
  border-bottom: 1px solid #a0a0a0;
}
.panels button {
  width: 100%;
  height: 21px;
  justify-content: flex-start;
  gap: 9px;
  padding-left: 3px;
  background-color: #d1d1d1;
  border-top: 1px solid #a0a0a0;
  color: #666;
}
.panels svg {
  width: 8px;
  height: 8px;
}
.viewcube {
  position: absolute;
  top: 6px;
  right: 7px;
  width: 64px;
  height: 60px;
  font-size: 9px;
}
.viewcube .face {
  font-size: 6px;
  fill: #777;
}
.axis-x {
  fill: #ee6d74;
}
.axis-y {
  fill: #9be8a0;
}
.axis-z {
  fill: #6b6be8;
}
.navbar {
  position: absolute;
  bottom: 3px;
  left: 50%;
  display: flex;
  gap: 6px;
  transform: translateX(-50%);
}
.nav-group {
  display: flex;
  align-items: center;
  gap: 6px;
  height: 20px;
  padding: 0 2px;
  background-color: #cbcbcb;
}
.nav-group + .nav-group {
  gap: 2px;
}
.nav-group svg {
  width: 15px;
  height: 15px;
}
.nav-group .caret {
  margin-left: 2px;
}

/* timeline */
.timeline {
  display: flex;
  align-items: center;
  height: 40px;
  padding: 0 7px 0 8px;
  background-color: #cdcdcd;
}
.playback {
  display: flex;
  gap: 8px;
  width: 108px;
}
.playback svg {
  width: 12px;
  height: 12px;
}
.track {
  position: relative;
  width: 315px;
  padding-top: 4px;
}
.steps {
  display: flex;
  margin: 0;
  padding: 0;
  list-style: none;
}
.steps li {
  flex: 1;
  display: flex;
  justify-content: center;
}
.steps svg {
  width: 16px;
  height: 16px;
}
.steps .future {
  opacity: 0.3;
}
.ruler {
  display: flex;
  height: 5px;
  margin: 2px 9px 0 10px;
  border-right: 2px solid #777;
  border-bottom: 2px solid #777;
}
.ruler i {
  flex: 1;
  border-left: 2px solid #777;
}
.marker {
  position: absolute;
  bottom: 0;
  left: 50%;
  width: 10px;
  height: 26px;
  margin-left: -5px;
}
.settings {
  margin-left: auto;
}
.settings svg {
  width: 14px;
  height: 14px;
}

/* taskbar */
.taskbar {
  display: flex;
  height: 33px;
  padding-right: 4px;
  background-color: #03050a;
  color: white;
}
.taskbar svg {
  width: 20px;
  height: 20px;
}
.system, .apps, .tray {
  display: flex;
}
.system button {
  width: 39px;
}
.apps {
  margin-left: 3px;
}
.apps button {
  width: 41px;
  border-top: 2px solid transparent;
  border-bottom: 2px solid transparent;
}
.apps .open {
  width: 33px;
  margin: 0 4px;
  border-bottom-color: #6ea6dc;
}
.apps .active {
  width: 41px;
  margin: 0;
  background-color: #34373b;
  border-top-color: #34373b;
}
.letter {
  font-size: 11px;
  font-weight: bold;
  fill: white;
}
.tray {
  align-items: center;
  gap: 3px;
  margin-left: auto;
}
.taskbar .tray svg, .taskbar .notices svg {
  width: 16px;
  height: 16px;
}
.clock {
  width: 58px;
  padding-top: 2px;
  font-family: "Open Sans", sans-serif;
  font-size: 10px;
  line-height: 15px;
  text-align: center;
}
.notices {
  width: 38px;
  padding-right: 8px;
  border-right: 1px solid #444;
}
```
